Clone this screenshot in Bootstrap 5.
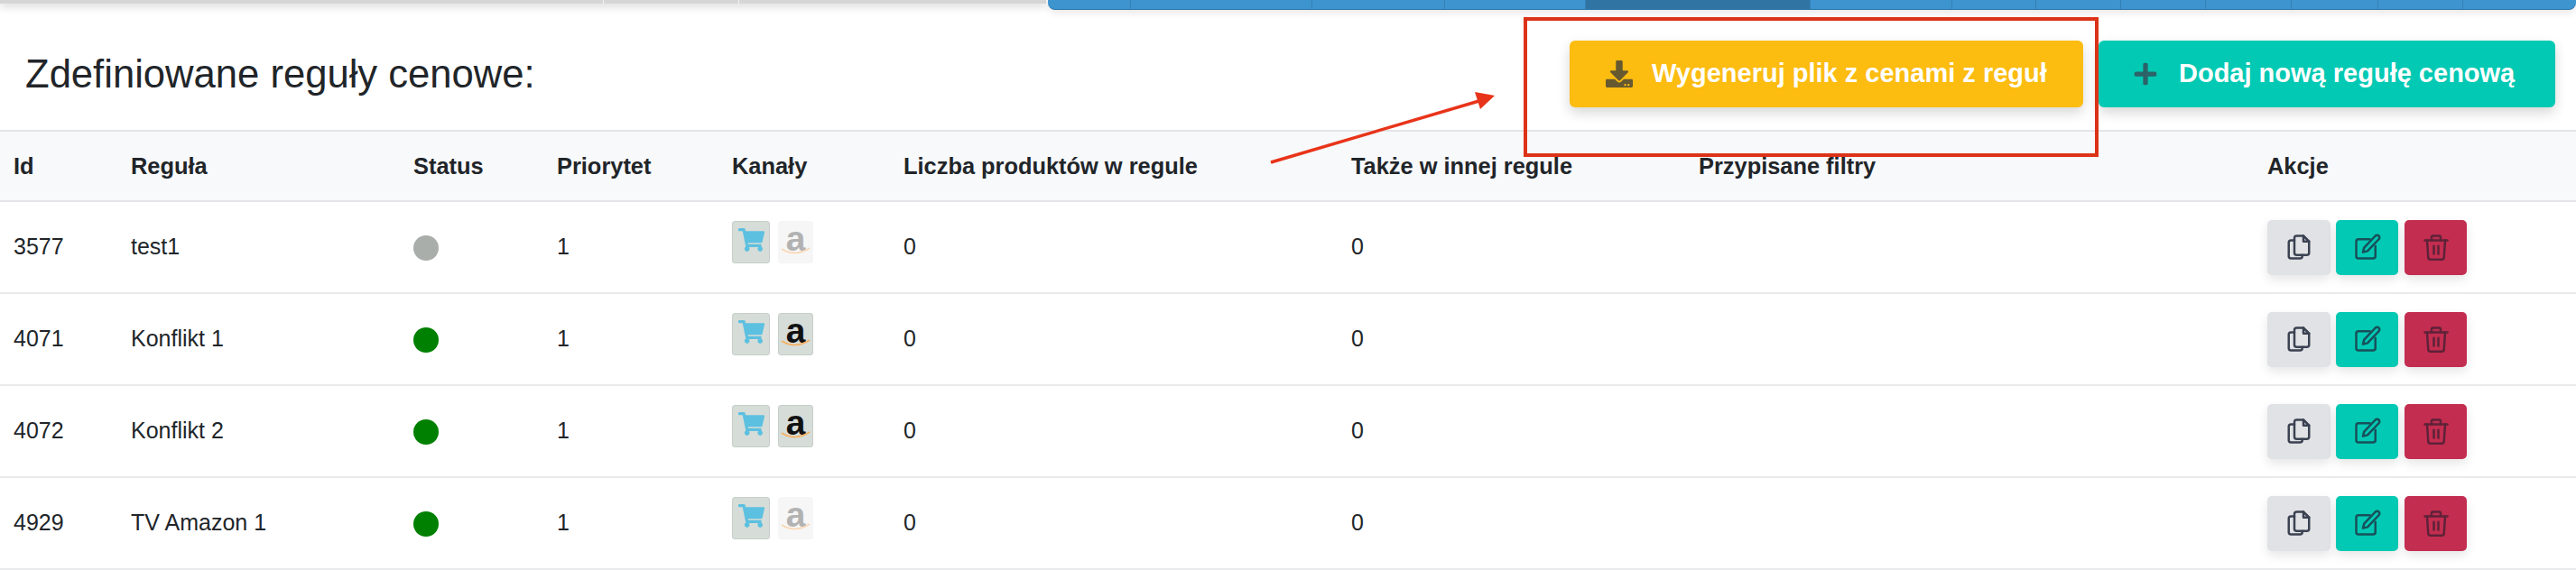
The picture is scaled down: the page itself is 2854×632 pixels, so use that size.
<!DOCTYPE html>
<html lang="pl">
<head>
  <meta charset="UTF-8" />
  <meta name="viewport" content="width=device-width, initial-scale=1.0" />
  <title>Reguły cenowe</title>
  <link href="https://cdn.jsdelivr.net/npm/bootstrap@5.3.2/dist/css/bootstrap.min.css" rel="stylesheet" />
  <style>
    body { font-family: "Liberation Sans", Arial, sans-serif; color: #212529; overflow: hidden; background: #fff; }
    .page-wrap { width: 2854px; height: 632px; overflow: hidden; }

    /* top strip */
    .top-strip { height: 11px; }
    .strip-left { width: 1159px; height: 4px; background: #d6d6d6; box-shadow: 0 2px 10px rgba(0,0,0,.28); }
    .strip-seg { border-right: 1px solid #f2f2f2; }
    .w669 { width: 669px; } .w150 { width: 150px; }
    .strip-tabs { width: 1693px; height: 11px; background: #3d94cf; border-bottom: 1px solid #2f76a8; border-radius: 0 0 8px 8px; overflow: hidden; box-shadow: 0 3px 8px rgba(0,0,0,.1); }
    .strip-tab { border-right: 1px solid #3580b5; }
    .strip-tab.is-on { background: #2f74a3; }
    .w92 { width: 92px; } .w201 { width: 201px; } .w147 { width: 147px; } .w156 { width: 156px; }
    .w249 { width: 249px; } .w157 { width: 157px; } .w93 { width: 93px; } .w94 { width: 94px; }
    .w95 { width: 95px; } .w96 { width: 96px; }

    /* heading row */
    .head-row { height: 133px; padding: 34px 23px 0 28px; }
    .page-title { font-size: 43.6px; font-weight: 400; line-height: 74px; margin: 0; }
    .cta { height: 74px; border: 0; border-radius: 6px; color: #fff; font-size: 29px; font-weight: 700; display: flex; align-items: center; box-shadow: 0 6px 14px rgba(0,0,0,.16); padding: 0; }
    .cta-gen { width: 569px; background: #fcbc10; padding-left: 40px; }
    .cta-add { width: 506px; background: #02c9b3; margin-left: 17px; padding-left: 39px; }
    .cta-icon-gen { width: 30px; height: 30px; fill: #67592f; margin-right: 21px; }
    .cta-icon-add { width: 26px; height: 28px; fill: #2c6268; margin-right: 24px; }

    /* table */
    .rules-table { table-layout: fixed; width: 2854px; margin: 0; }
    .rules-table th, .rules-table td { padding: 0 0 0 15px; vertical-align: middle; font-size: 25px; color: #212529; }
    .rules-table thead th { height: 78px; background: #f8f9fb; font-size: 25.4px; font-weight: 700; border-top: 2px solid #e3e5e8; border-bottom: 2px solid #e3e5e8; }
    .rules-table tbody td { height: 102px; border-bottom: 2px solid #e9eaec; }
    .c-id { width: 130px; } .c-rule { width: 313px; } .c-status { width: 159px; } .c-prio { width: 194px; }
    .c-chan { width: 190px; } .c-count { width: 496px; } .c-also { width: 385px; } .c-filter { width: 630px; }
    .c-act { width: 357px; }

    .status-dot { display: block; width: 28px; height: 28px; border-radius: 50%; margin-top: 1px; }
    .dot-off { background: #a9aeaa; }
    .dot-on { background: #008000; }

    .chan-wrap { margin-top: -11px; }
    .chan-box { height: 47px; border-radius: 3px; display: flex; align-items: center; justify-content: center; position: relative; background: #d6dcd8; border: 1px solid #c8cfca; }
    .chan-cart { width: 42px; margin-right: 9px; }
    .chan-cart svg { width: 29px; height: 26px; fill: #5cc0e0; margin-top: -6px; }
    .chan-amz { width: 39px; font-size: 39px; font-weight: 700; line-height: 1; color: #111; padding-bottom: 8px; }
    .chan-amz.is-off { background: #f6f6f6; border-color: #f6f6f6; color: #b2b2b2; }
    .amz-smile { position: absolute; left: 2px; bottom: 9px; width: 33px; height: 8px; fill: none; stroke: #f3b266; stroke-width: 2; }
    .is-off .amz-smile { stroke: #f8d9b8; }

    .act-btn { width: 69px; height: 61px; border: 0; border-radius: 5px; display: flex; align-items: center; justify-content: center; padding: 0; box-shadow: 0 5px 12px rgba(0,0,0,.1); margin-right: 7px; }
    .act-btn svg { width: 30px; height: 30px; fill: none; stroke-width: 2; stroke-linecap: round; stroke-linejoin: round; }
    .act-copy { width: 70px; margin-right: 6px; background: #e1e2e5; }
    .act-copy svg { stroke: #3b4252; }
    .act-edit { background: #02c9b3; }
    .act-edit svg { stroke: #17505a; }
    .act-del { background: #c32d50; }
    .act-del svg { stroke: #5e2238; }

    /* annotation drawn over the page */
    .mark-layer { position: absolute; left: 0; top: 0; pointer-events: none; }
  </style>
</head>
<body>
<div class="page-wrap position-relative">

  <div class="top-strip d-flex justify-content-between">
    <div class="strip-left d-flex">
      <div class="strip-seg w669"></div>
      <div class="strip-seg w150"></div>
    </div>
    <div class="strip-tabs d-flex">
      <div class="strip-tab w92"></div>
      <div class="strip-tab w201"></div>
      <div class="strip-tab w147"></div>
      <div class="strip-tab w156"></div>
      <div class="strip-tab w249 is-on"></div>
      <div class="strip-tab w157"></div>
      <div class="strip-tab w93"></div>
      <div class="strip-tab w94"></div>
      <div class="strip-tab w94"></div>
      <div class="strip-tab w95"></div>
      <div class="strip-tab w96"></div>
      <div class="strip-tab w94"></div>
    </div>
  </div>

  <div class="head-row d-flex justify-content-between align-items-start">
    <h1 class="page-title">Zdefiniowane reguły cenowe:</h1>
    <div class="d-flex">
      <button type="button" class="btn cta cta-gen">
        <svg class="cta-icon-gen" viewBox="0 0 512 512"><path d="M216 0h80c13.3 0 24 10.7 24 24v168h87.7c17.8 0 26.7 21.5 14.1 34.1L269.7 378.3c-7.5 7.5-19.8 7.5-27.3 0L90.1 226.1c-12.6-12.6-3.7-34.1 14.1-34.1H192V24c0-13.3 10.7-24 24-24zm296 376v112c0 13.3-10.7 24-24 24H24c-13.3 0-24-10.7-24-24V376c0-13.3 10.7-24 24-24h146.7l49 49c20.1 20.1 52.5 20.1 72.6 0l49-49H488c13.3 0 24 10.7 24 24zm-124 88c0-11-9-20-20-20s-20 9-20 20 9 20 20 20 20-9 20-20zm64 0c0-11-9-20-20-20s-20 9-20 20 9 20 20 20 20-9 20-20z"/></svg>
        Wygeneruj plik z cenami z reguł
      </button>
      <button type="button" class="btn cta cta-add">
        <svg class="cta-icon-add" viewBox="0 0 448 512"><path d="M416 208H272V64c0-17.67-14.33-32-32-32h-32c-17.67 0-32 14.33-32 32v144H32c-17.67 0-32 14.33-32 32v32c0 17.67 14.33 32 32 32h144v144c0 17.67 14.33 32 32 32h32c17.67 0 32-14.33 32-32V304h144c17.67 0 32-14.33 32-32v-32c0-17.67-14.33-32-32-32z"/></svg>
        Dodaj nową regułę cenową
      </button>
    </div>
  </div>

  <table class="table rules-table">
    <thead>
      <tr>
        <th class="c-id">Id</th>
        <th class="c-rule">Reguła</th>
        <th class="c-status">Status</th>
        <th class="c-prio">Priorytet</th>
        <th class="c-chan">Kanały</th>
        <th class="c-count">Liczba produktów w regule</th>
        <th class="c-also">Także w innej regule</th>
        <th class="c-filter">Przypisane filtry</th>
        <th class="c-act">Akcje</th>
      </tr>
    </thead>
    <tbody id="ruleRows"></tbody>
  </table>

  <svg class="mark-layer" width="2854" height="632" viewBox="0 0 2854 632">
    <rect x="1690" y="21" width="633" height="151" fill="none" stroke="#dc3318" stroke-width="4"/>
    <path d="M1408 180 L1642 111" stroke="#e8341a" stroke-width="3.5" fill="none"/>
    <path d="M1656 106 L1634 102 L1640 121 Z" fill="#e8341a"/>
  </svg>
</div>

<template id="rowTpl">
  <tr>
    <td class="js-id"></td>
    <td class="js-name"></td>
    <td><span class="status-dot"></span></td>
    <td>1</td>
    <td>
      <div class="chan-wrap d-flex">
        <div class="chan-box chan-cart">
          <svg viewBox="0 0 576 512"><path d="M528.12 301.319l47.273-208C578.806 78.301 567.391 64 551.99 64H159.208l-9.166-44.81C147.758 8.021 137.93 0 126.529 0H24C10.745 0 0 10.745 0 24v16c0 13.255 10.745 24 24 24h69.883l70.248 343.435C147.325 417.1 136 435.222 136 456c0 30.928 25.072 56 56 56s56-25.072 56-56c0-15.674-6.447-29.835-16.824-40h209.647C430.447 426.165 424 440.326 424 456c0 30.928 25.072 56 56 56s56-25.072 56-56c0-22.172-12.888-41.332-31.579-50.405l5.517-24.276c3.413-15.018-8.002-29.319-23.403-29.319H218.117l-6.545-32h293.145c11.206 0 20.92-7.754 23.403-18.681z"/></svg>
        </div>
        <div class="chan-box chan-amz">a<svg class="amz-smile" viewBox="0 0 33 8"><path d="M1 2 C10 8 22 8 32 1"/></svg></div>
      </div>
    </td>
    <td>0</td>
    <td>0</td>
    <td></td>
    <td>
      <div class="d-flex">
        <button type="button" class="btn act-btn act-copy">
          <svg viewBox="0 0 24 24"><path d="M10 2h6l5 5v10a2 2 0 0 1-2 2h-9a2 2 0 0 1-2-2V4a2 2 0 0 1 2-2z"/><path d="M16 2v5h5"/><path d="M8 6H5a2 2 0 0 0-2 2v12a2 2 0 0 0 2 2h8a2 2 0 0 0 2-2v-1"/></svg>
        </button>
        <button type="button" class="btn act-btn act-edit">
          <svg viewBox="0 0 24 24"><path d="M14 5H4a2 2 0 0 0-2 2v13a2 2 0 0 0 2 2h13a2 2 0 0 0 2-2V11"/><path d="M19 2a2.1 2.1 0 0 1 3 3L12 15.5l-4 1 1-4z"/></svg>
        </button>
        <button type="button" class="btn act-btn act-del">
          <svg viewBox="0 0 24 24"><path d="M2 6h20"/><path d="M8 6V3a1 1 0 0 1 1-1h6a1 1 0 0 1 1 1v3"/><path d="M4 6l1 15a2 2 0 0 0 2 2h10a2 2 0 0 0 2-2l1-15"/><path d="M10 11v7"/><path d="M14 11v7"/></svg>
        </button>
      </div>
    </td>
  </tr>
</template>

<script>
  const rules = [
    { id: 3577, name: "test1", on: false, amazon: false },
    { id: 4071, name: "Konflikt 1", on: true, amazon: true },
    { id: 4072, name: "Konflikt 2", on: true, amazon: true },
    { id: 4929, name: "TV Amazon 1", on: true, amazon: false }
  ];

  const rowTpl = document.getElementById("rowTpl");
  const ruleRows = document.getElementById("ruleRows");

  rules.forEach(rule => {
    const row = rowTpl.content.cloneNode(true);
    row.querySelector(".js-id").textContent = rule.id;
    row.querySelector(".js-name").textContent = rule.name;
    row.querySelector(".status-dot").classList.add(rule.on ? "dot-on" : "dot-off");
    if (!rule.amazon) row.querySelector(".chan-amz").classList.add("is-off");
    ruleRows.appendChild(row);
  });
</script>
<script src="https://cdn.jsdelivr.net/npm/bootstrap@5.3.2/dist/js/bootstrap.bundle.min.js"></script>
</body>
</html>
